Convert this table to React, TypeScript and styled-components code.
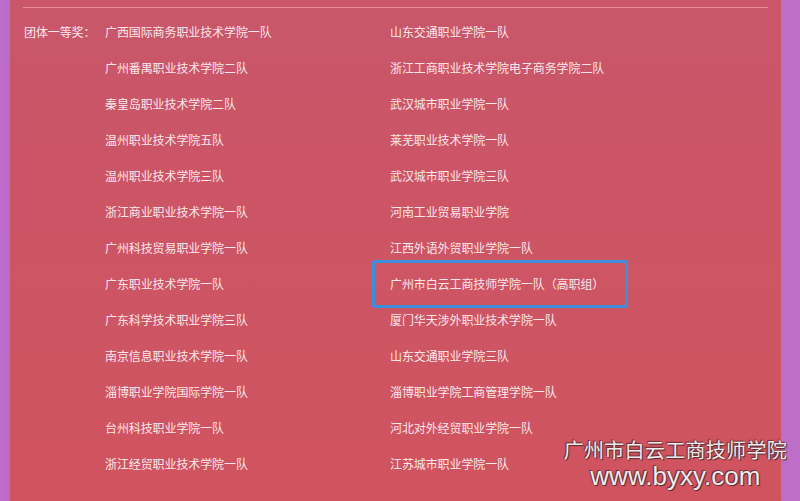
import React from "react";
import styled, { createGlobalStyle } from "styled-components";

const Global = createGlobalStyle`
  html, body { margin: 0; padding: 0; }
  body {
    width: 800px; height: 501px; overflow: hidden;
    background: #bd6fc8;
    font-family: "Noto Sans CJK SC", "Microsoft YaHei", sans-serif;
  }
`;

const Page = styled.div`
  position: relative;
  width: 800px;
  height: 501px;
  display: flex;
  padding: 0 19px 0 10px;
  box-sizing: border-box;
  background: linear-gradient(90deg, #c16fcc 0%, #b86bc6 1.2%, #bd6fc8 100%);
`;

const Panel = styled.div`
  flex: 1;
  background: linear-gradient(180deg, #c9566a 0%, #d0545f 100%);
  padding: 7px 13px 0 13px;
  box-sizing: border-box;
`;

const Rule = styled.div`
  height: 1px;
  background: #e98b98;
  margin-bottom: 6px;
`;

const Grid = styled.div`
  display: grid;
  grid-template-columns: 81px 285px 1fr;
  grid-auto-rows: 36px;
  padding-left: 1px;
`;

const Cell = styled.div`
  position: relative;
  justify-self: start;
  display: flex;
  align-items: center;
  color: #fbe6ea;
  font-size: 12px;
  line-height: 1;
  white-space: nowrap;
  letter-spacing: -0.1px;
`;

const Highlight = styled.div`
  position: absolute;
  left: -18px;
  top: -6px;
  width: 256px;
  height: 48px;
  border: 3px solid #3d8edc;
  border-radius: 3px;
  box-sizing: border-box;
`;

const Watermark = styled.div`
  position: absolute;
  right: 13px;
  bottom: 11px;
  display: flex;
  flex-direction: column;
  align-items: center;
  gap: 2px;
  color: #f1eaec;
  text-shadow: 0 0 1px #5a2a30, 1px 1px 1px #5a2a30, -1px -1px 1px #6a3038;
`;

const WmCn = styled.div`
  font-family: "Noto Sans CJK SC", sans-serif;
  font-size: 20px;
  line-height: 22px;
  letter-spacing: 0.3px;
`;

const WmUrl = styled.div`
  font-family: "Liberation Sans", Arial, sans-serif;
  font-size: 26px;
  line-height: 27px;
`;

const left = [
  "广西国际商务职业技术学院一队",
  "广州番禺职业技术学院二队",
  "秦皇岛职业技术学院二队",
  "温州职业技术学院五队",
  "温州职业技术学院三队",
  "浙江商业职业技术学院一队",
  "广州科技贸易职业学院一队",
  "广东职业技术学院一队",
  "广东科学技术职业学院三队",
  "南京信息职业技术学院一队",
  "淄博职业学院国际学院一队",
  "台州科技职业学院一队",
  "浙江经贸职业技术学院一队",
];

const right = [
  "山东交通职业学院一队",
  "浙江工商职业技术学院电子商务学院二队",
  "武汉城市职业学院一队",
  "莱芜职业技术学院一队",
  "武汉城市职业学院三队",
  "河南工业贸易职业学院",
  "江西外语外贸职业学院一队",
  "广州市白云工商技师学院一队（高职组）",
  "厦门华天涉外职业技术学院一队",
  "山东交通职业学院三队",
  "淄博职业学院工商管理学院一队",
  "河北对外经贸职业学院一队",
  "江苏城市职业学院一队",
];

export default function App() {
  return (
    <>
      <Global />
      <Page>
        <Panel>
          <Rule />
          <Grid>
            {left.map((l, i) => (
              <React.Fragment key={i}>
                <Cell>{i === 0 ? "团体一等奖：" : ""}</Cell>
                <Cell>{l}</Cell>
                <Cell>
                  {i === 7 && <Highlight />}
                  {right[i]}
                </Cell>
              </React.Fragment>
            ))}
          </Grid>
        </Panel>
        <Watermark>
          <WmCn>广州市白云工商技师学院</WmCn>
          <WmUrl>www.byxy.com</WmUrl>
        </Watermark>
      </Page>
    </>
  );
}
